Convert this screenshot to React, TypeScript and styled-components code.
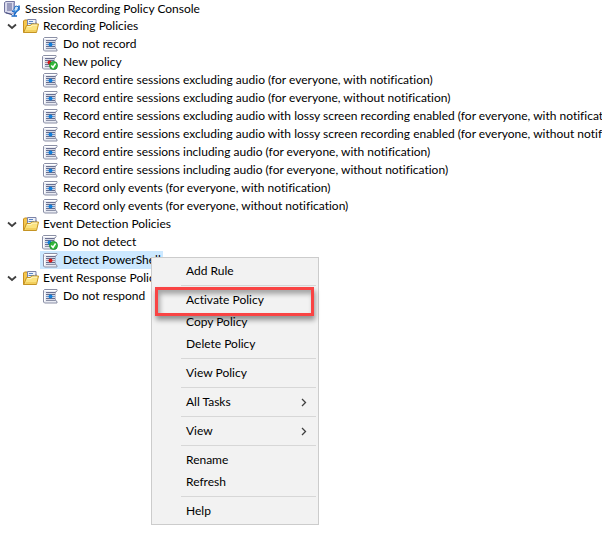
import React from "react";
import styled, { createGlobalStyle } from "styled-components";

const GlobalStyle = createGlobalStyle`
  *, *::before, *::after { box-sizing: border-box; }
  body {
    margin: 0;
    background: #fff;
    color: #000;
    font: 12px/18px Lato, "Open Sans", sans-serif;
    font-variant-ligatures: none;
  }
  ul { list-style: none; margin: 0; padding: 0; }
  button {
    margin: 0;
    border: 0;
    background: none;
    color: inherit;
    font: inherit;
    font-variant-ligatures: inherit;
    text-align: left;
  }
  svg { display: block; flex: none; }
`;

const Page = styled.main`
  position: relative;
  min-height: 100vh;
  overflow: hidden;
`;

const RootRow = styled.div`
  display: flex;
  align-items: center;
  gap: 5px;
  height: 17px;
  padding-left: 4px;
  white-space: nowrap;
`;

const Row = styled.div`
  display: flex;
  align-items: center;
  height: 18px;
  padding-left: 6px;
`;

const Expander = styled.button`
  display: flex;
  align-items: center;
  justify-content: center;
  width: 12px;
  height: 16px;
  padding: 0;
`;

const FolderLabel = styled.button`
  display: flex;
  align-items: center;
  gap: 4px;
  height: 18px;
  padding: 0 5px;
  white-space: nowrap;
`;

const PolicyList = styled.ul`
  padding-left: 40px;
`;

const PolicyLabel = styled.button<{ $selected?: boolean }>`
  display: flex;
  align-items: center;
  gap: 5px;
  height: 18px;
  padding: 0 2px;
  white-space: nowrap;
  background: ${(p) => (p.$selected ? "#cce8ff" : "transparent")};
`;

const Menu = styled.div`
  position: absolute;
  left: 151px;
  top: 257px;
  width: 168px;
  padding: 2px;
  border: 1px solid #ccc;
  background: #f2f2f2;
`;

const MenuItem = styled.button`
  display: flex;
  align-items: center;
  justify-content: space-between;
  width: 100%;
  height: 22px;
  padding: 0 8px 0 32px;
`;

const Separator = styled.hr`
  height: 1px;
  margin: 3px 0 3px 27px;
  border: 0;
  background: #d7d7d7;
`;

const Callout = styled.div`
  position: absolute;
  left: 3px;
  top: 29px;
  width: 159px;
  height: 29px;
  border: 3px solid #f94444;
  box-shadow: 1px 4px 5px rgba(0, 0, 0, 0.4), inset 2px 4px 5px rgba(0, 0, 0, 0.32);
  pointer-events: none;
`;

const Chevron: React.FC = () => (
  <svg width="12" height="12" viewBox="0 0 12 12" fill="none" stroke="#404040" strokeWidth="1.8" aria-hidden>
    <path d="M2 4.500l4 3.500 4-3.500" />
  </svg>
);

const Arrow: React.FC = () => (
  <svg width="8" height="10" viewBox="0 0 8 10" fill="none" stroke="#404040" strokeWidth="1.3" aria-hidden>
    <path d="M2 2l3.500 3.500L2 9" />
  </svg>
);

const ConsoleIcon: React.FC = () => (
  <svg width="16" height="16" viewBox="0 0 16 16" aria-hidden>
    <path d="M.5 1.5l1.500-1h8.500v10.500l-2.500 2.500-6.500-1.500-1-1z" fill="#d8d9ec" stroke="#7377a0" />
    <path d="M9 1.500h1.500v10l-1.500 1.500z" fill="#a5a8ce" />
    <path d="M3 3h5M3 5h5M3 7h5M3 9h5" stroke="#5a5f90" />
    <path d="M1.500 11.500l6.500 2" stroke="#484e80" />
    <path d="M11 5.500l2-.5 1.500 1.500-1 3-2.500 1-1-2z" fill="#cfe6fb" stroke="#1d6fc4" />
    <path d="M15 4.500v4l-3 2.500-4-1M12 11l-2 3M7.500 15h5.500" fill="none" stroke="#1767c5" strokeWidth="1.600" />
    <path d="M9 9.500l3 .8 2-2" fill="none" stroke="#6bb1ef" />
  </svg>
);

const FolderIcon: React.FC = () => (
  <svg width="16" height="16" viewBox="0 0 16 16" aria-hidden>
    <path d="M.5 14.500V3l1-1h2.500l1 2v10.500z" fill="#f5c74e" stroke="#c78f20" />
    <path d="M4.500 1.500h8.500v9h-8.500z" fill="#eef1f9" stroke="#7c83a8" />
    <path d="M6 3.500h4M5.500 5.500h6" stroke="#5b86c4" />
    <path d="M13 4.500v4" stroke="#5b628c" />
    <path d="M.8 14.500L3.500 7.500h4l1-1.500h7l-2 8.500z" fill="#fbe27e" stroke="#c59424" />
    <path d="M4.200 8.600h4l1-1.500h5" fill="none" stroke="#fff7c9" />
    <path d="M2.500 13h10.500" stroke="#eabc3c" />
  </svg>
);

type Tone = "blue" | "red";

const PolicyIcon: React.FC<{ tone: Tone; active?: boolean }> = ({ tone, active }) => (
  <svg width="16" height="16" viewBox="0 0 16 16" aria-hidden>
    <g transform={active ? "translate(-1 0)" : undefined}>
      <path
        d="M2.500 1.500h12.500v1.500l-2 1.500v6.500l1 2 1 .5v1.500h-12.500l-1-1v-11.500z"
        fill="#e9ebf3"
        stroke="#8b90a6"
      />
      <path d="M2.500 2.500h12M2.500 5v8" stroke="#fff" />
      <path d="M4 4.500h9.500" stroke="#6a7090" />
      <path d="M4.500 5h8.500v7h-8.500z" fill="#d5d9e6" />
      <path d="M4 6.500h9M4 10.500h9" stroke="#656c8c" />
      <path d="M4 8.500h9" stroke={tone === "red" ? "#b58a98" : "#6e93c4"} />
      <path d="M4 12.500h9.500" stroke="#8b90a6" />
      <circle cx="8.500" cy="8.500" r="2" fill={tone === "red" ? "#d91a1a" : "#1480dc"} />
    </g>
    {active && (
      <>
        <circle cx="11.500" cy="11.500" r="4" fill="#35b83a" stroke="#168a2c" strokeWidth=".8" />
        <path d="M9.300 11.500l1.700 2 2.600-4" fill="none" stroke="#fff" strokeWidth="1.500" />
      </>
    )}
  </svg>
);

interface Policy {
  name: string;
  tone?: Tone;
  active?: boolean;
  selected?: boolean;
}

const groups: { name: string; policies: Policy[] }[] = [
  {
    name: "Recording Policies",
    policies: [
      { name: "Do not record" },
      { name: "New policy", tone: "red", active: true },
      { name: "Record entire sessions excluding audio (for everyone, with notification)" },
      { name: "Record entire sessions excluding audio (for everyone, without notification)" },
      { name: "Record entire sessions excluding audio with lossy screen recording enabled (for everyone, with notification)" },
      { name: "Record entire sessions excluding audio with lossy screen recording enabled (for everyone, without notification)" },
      { name: "Record entire sessions including audio (for everyone, with notification)" },
      { name: "Record entire sessions including audio (for everyone, without notification)" },
      { name: "Record only events (for everyone, with notification)" },
      { name: "Record only events (for everyone, without notification)" },
    ],
  },
  {
    name: "Event Detection Policies",
    policies: [
      { name: "Do not detect", active: true },
      { name: "Detect PowerShell", tone: "red", selected: true },
    ],
  },
  { name: "Event Response Policies", policies: [{ name: "Do not respond" }] },
];

const menuSections: { label: string; submenu?: boolean }[][] = [
  [{ label: "Add Rule" }],
  [{ label: "Activate Policy" }, { label: "Copy Policy" }, { label: "Delete Policy" }],
  [{ label: "View Policy" }],
  [{ label: "All Tasks", submenu: true }],
  [{ label: "View", submenu: true }],
  [{ label: "Rename" }, { label: "Refresh" }],
  [{ label: "Help" }],
];

const App: React.FC = () => (
  <>
    <GlobalStyle />
    <Page>
      <RootRow>
        <ConsoleIcon />
        Session Recording Policy Console
      </RootRow>
      <ul>
        {groups.map((group) => (
          <li key={group.name}>
            <Row>
              <Expander aria-label={`Collapse ${group.name}`} aria-expanded>
                <Chevron />
              </Expander>
              <FolderLabel>
                <FolderIcon />
                {group.name}
              </FolderLabel>
            </Row>
            <PolicyList>
              {group.policies.map((policy) => (
                <li key={policy.name}>
                  <PolicyLabel $selected={policy.selected}>
                    <PolicyIcon tone={policy.tone ?? "blue"} active={policy.active} />
                    {policy.name}
                  </PolicyLabel>
                </li>
              ))}
            </PolicyList>
          </li>
        ))}
      </ul>
      <Menu role="menu">
        {menuSections.map((section, index) => (
          <React.Fragment key={section[0].label}>
            {index > 0 && <Separator />}
            {section.map((item) => (
              <MenuItem key={item.label} role="menuitem" aria-haspopup={item.submenu}>
                {item.label}
                {item.submenu && <Arrow />}
              </MenuItem>
            ))}
          </React.Fragment>
        ))}
        <Callout />
      </Menu>
    </Page>
  </>
);

export default App;
